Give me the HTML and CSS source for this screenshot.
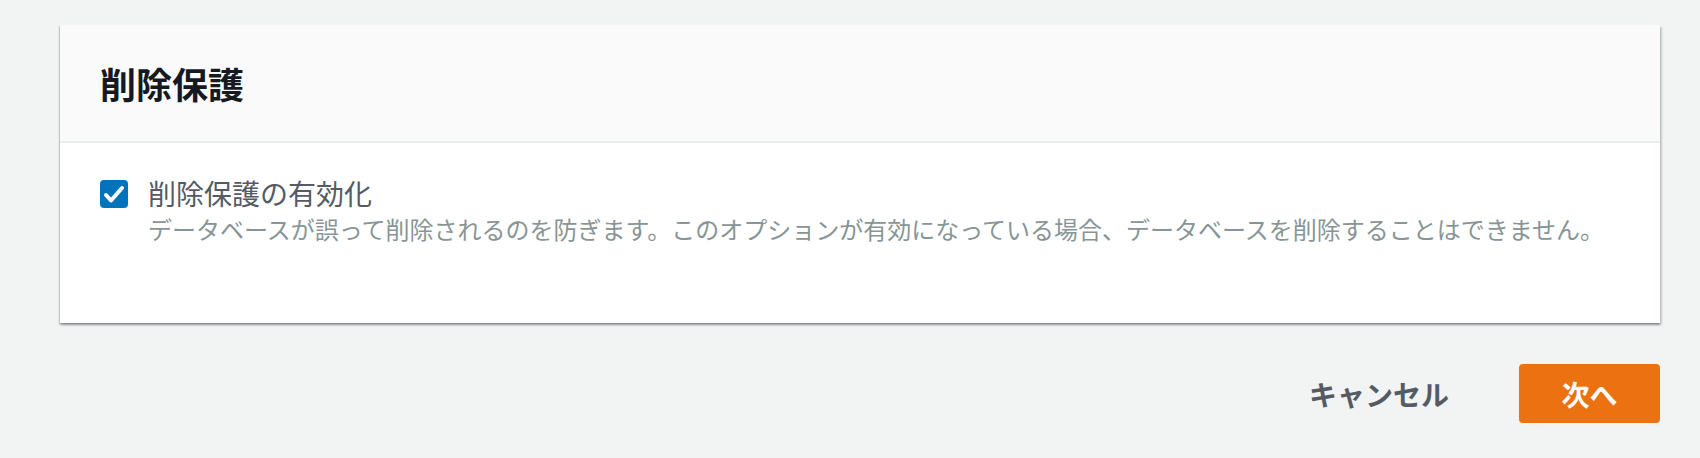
FILE: index.html
```html
<!DOCTYPE html>
<html lang="ja">
<head>
  <meta charset="UTF-8" />
  <meta name="viewport" content="width=device-width, initial-scale=1.0"/>
  <title>削除保護</title>
  <link rel="stylesheet" href="styles.css">
</head>
<body>
  <div class="page">
    <div class="panel">
      <div class="panel-header">
        <h2>削除保護</h2>
      </div>
      <div class="panel-body">
        <label class="option">
          <span class="checkbox">
            <svg width="28" height="28" viewBox="0 0 28 28">
              <path d="M6 15 L11 20.5 L22 8" fill="none" stroke="#fff" stroke-width="4" stroke-linecap="round" stroke-linejoin="round"/>
            </svg>
          </span>
          <span class="option-text">
            <span class="option-label">削除保護の有効化</span>
            <span class="option-desc">データベースが誤って削除されるのを防ぎます。このオプションが有効になっている場合、データベースを削除することはできません。</span>
          </span>
        </label>
      </div>
    </div>

    <div class="actions">
      <button class="btn-link">キャンセル</button>
      <button class="btn-primary">次へ</button>
    </div>
  </div>
</body>
</html>
```

FILE: styles.css
```css
body {
  margin: 0;
  font-family: "Noto Sans CJK JP", "Noto Sans", sans-serif;
  background-color: #f2f3f3;
  height: 458px;
  overflow: hidden;
}

.page {
  width: 1600px;
  padding: 25px 0 0 60px;
}

.panel {
  background: #fff;
  box-shadow: 0 2px 2px 0 rgba(0, 28, 36, 0.3), 2px 2px 2px 0 rgba(0, 28, 36, 0.15), -1px 1px 1px 0 rgba(0, 28, 36, 0.12);
}

.panel-header {
  background: #fafafa;
  height: 116px;
  padding: 0 40px;
  display: flex;
  align-items: center;
  border-bottom: 2px solid #eaeded;
}

.panel-header h2 {
  margin: 0;
  font-size: 36px;
  font-weight: bold;
  color: #16191f;
  line-height: 44px;
}

.panel-body {
  padding: 32px 40px 78px 40px;
}

.option {
  display: flex;
  align-items: flex-start;
  gap: 20px;
}

.checkbox {
  flex: none;
  width: 28px;
  height: 28px;
  margin-top: 5px;
  background: #0073bb;
  border-radius: 4px;
  display: flex;
}

.option-text {
  display: flex;
  flex-direction: column;
}

.option-label {
  font-size: 28px;
  line-height: 36px;
  color: #545b64;
}

.option-desc {
  margin-top: 2px;
  font-size: 24px;
  line-height: 32px;
  color: #879596;
}

.actions {
  display: flex;
  justify-content: flex-end;
  align-items: center;
  gap: 70px;
  margin-top: 41px;
}

.actions button {
  font-family: inherit;
  font-size: 28px;
  font-weight: bold;
  border: none;
  cursor: pointer;
}

.btn-link {
  background: none;
  color: #545b64;
  padding: 0;
}

.btn-primary {
  background: #ec7211;
  color: #fff;
  width: 141px;
  height: 59px;
  border-radius: 4px;
  padding: 0;
}
```
